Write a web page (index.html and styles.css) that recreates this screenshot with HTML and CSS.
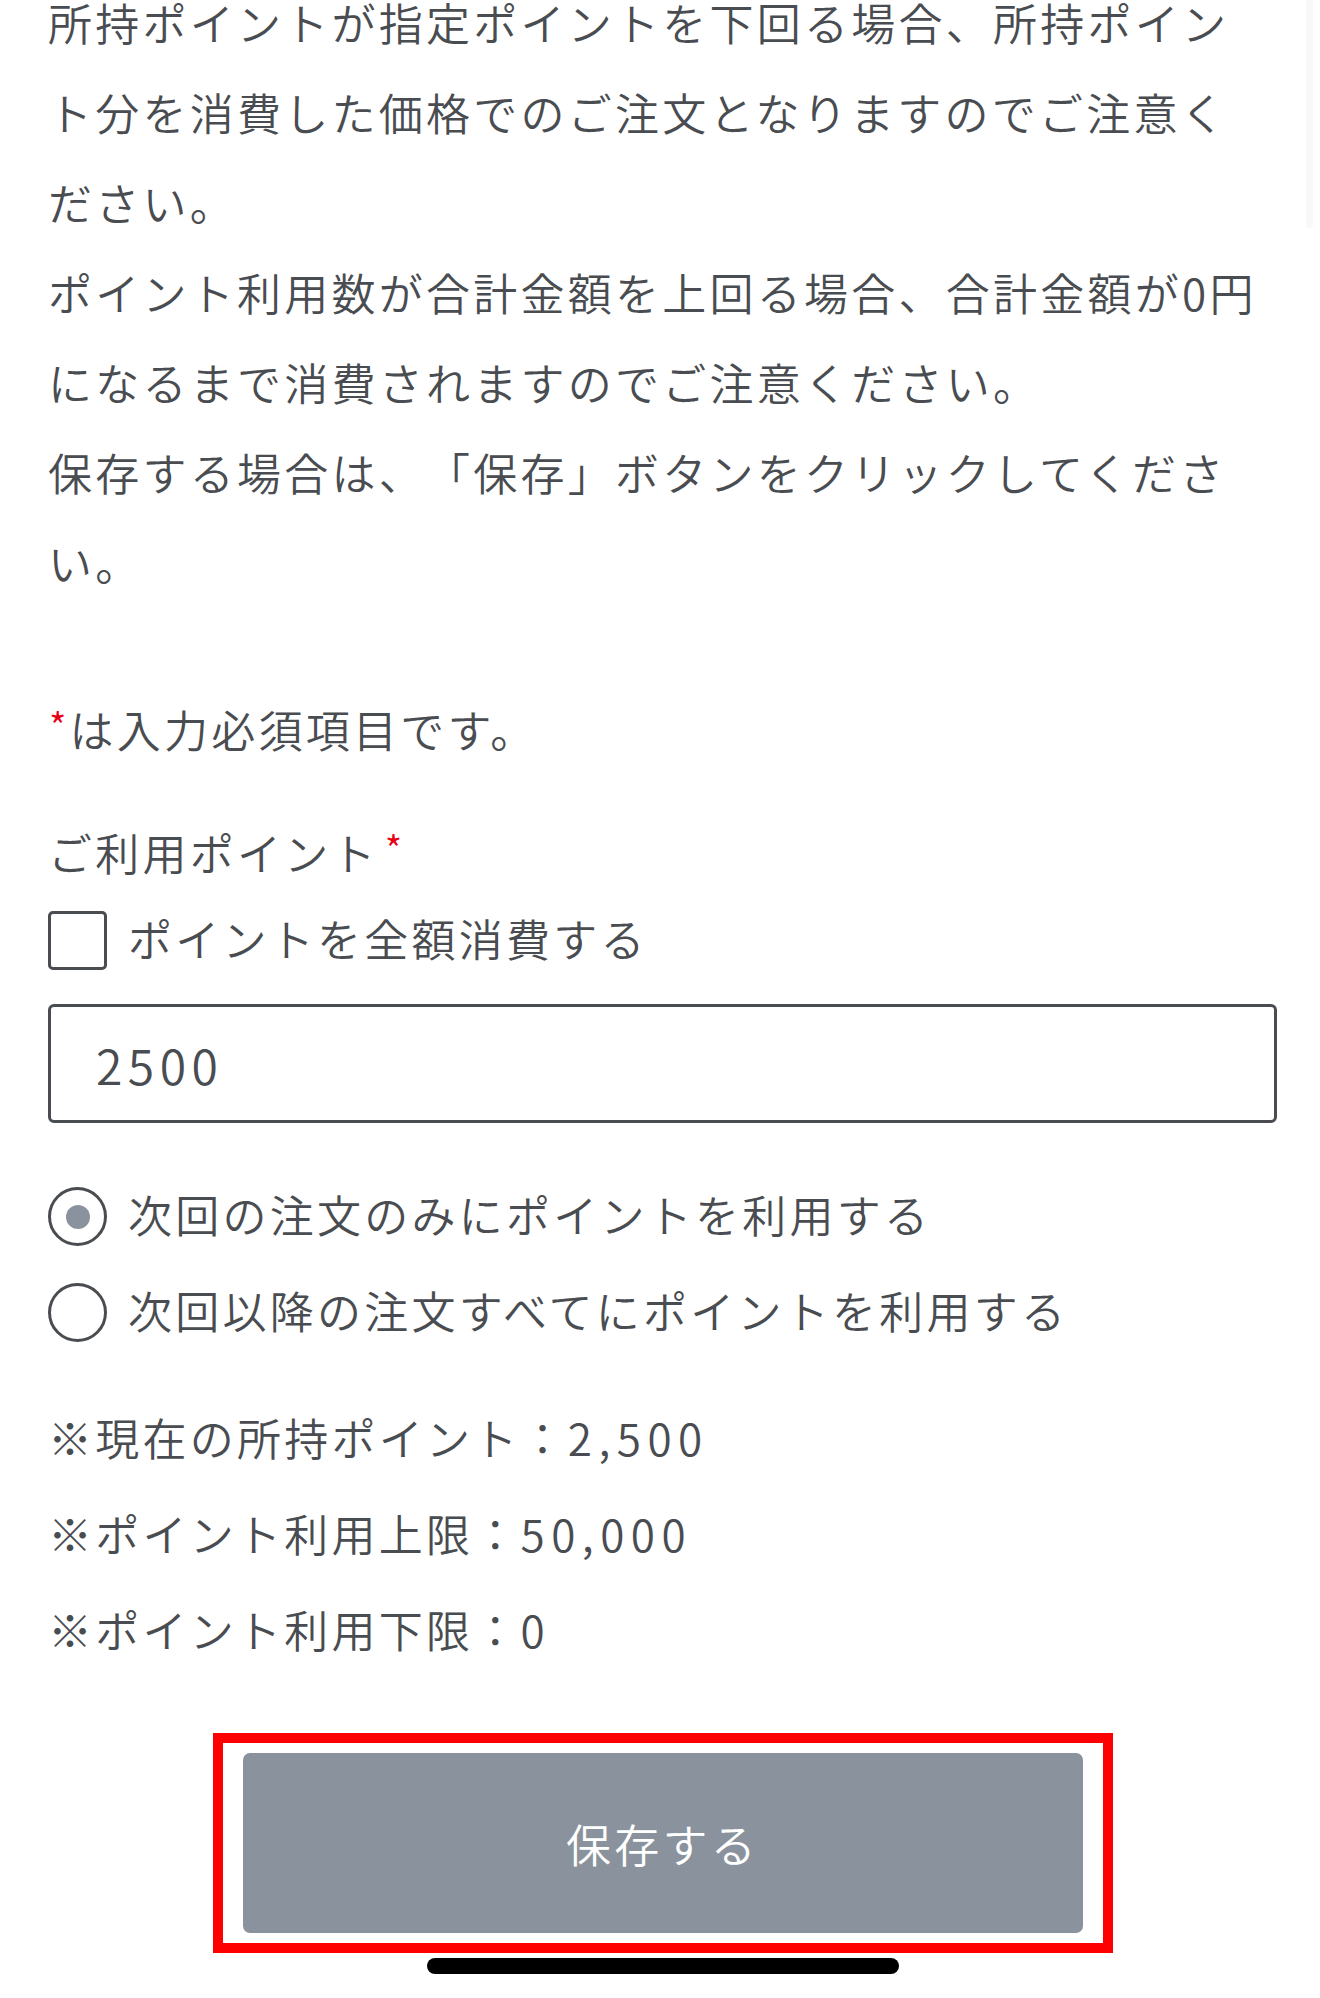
FILE: index.html
```html
<!DOCTYPE html>
<html lang="ja">
<head>
<meta charset="utf-8">
<title>ポイント利用</title>
<link rel="stylesheet" href="styles.css">
</head>
<body>
<div class="scroll-track"></div>
<main class="page">
  <div class="intro">
    <p>所持ポイントが指定ポイントを下回る場合、所持ポイント分を消費した価格でのご注文となりますのでご注意ください。</p>
    <p>ポイント利用数が合計金額を上回る場合、合計金額が0円になるまで消費されますのでご注意ください。</p>
    <p>保存する場合は、「保存」ボタンをクリックしてください。</p>
  </div>

  <p class="required-note"><span class="req">*</span>は入力必須項目です。</p>

  <form class="point-form">
    <div class="field-label">ご利用ポイント<span class="req">*</span></div>
    <label class="check-row">
      <span class="checkbox"></span>
      <span class="opt-text">ポイントを全額消費する</span>
    </label>
    <div class="input-box">2500</div>

    <div class="radios">
      <label class="radio-row">
        <span class="radio checked"></span>
        <span class="opt-text">次回の注文のみにポイントを利用する</span>
      </label>
      <label class="radio-row">
        <span class="radio"></span>
        <span class="opt-text">次回以降の注文すべてにポイントを利用する</span>
      </label>
    </div>

    <ul class="notes">
      <li>※現在の所持ポイント：<span class="num">2,500</span></li>
      <li>※ポイント利用上限：<span class="num">50,000</span></li>
      <li>※ポイント利用下限：<span class="num">0</span></li>
    </ul>

    <div class="btn-wrap">
      <div class="highlight">
        <button type="button" class="save-btn">保存する</button>
      </div>
    </div>
  </form>
</main>
<div class="home-indicator"></div>
</body>
</html>
```

FILE: styles.css
```css
html, body {
  margin: 0;
  padding: 0;
  background: #ffffff;
}

body {
  position: relative;
  width: 1320px;
  height: 1998px;
  overflow: hidden;
  font-family: "Noto Sans CJK JP", "Noto Sans", sans-serif;
  font-weight: 350;
  color: #494c50;
  font-size: 44px;
  letter-spacing: 3.25px;
  text-spacing-trim: space-all;
}

.scroll-track {
  position: absolute;
  top: 0;
  left: 1306px;
  width: 7px;
  height: 228px;
  background: #f8f8f8;
  border-radius: 0 0 4px 4px;
}

.page {
  padding: 0 43px 0 48px;
  margin-top: -23px;
}

.intro {
  margin-right: 8px;
}

.intro p {
  margin: 0;
  line-height: 90px;
}

.num {
  letter-spacing: 6.5px;
}

.required-note {
  margin: 77px 0 0;
  line-height: 90px;
}

.req {
  color: #e60012;
  font-size: 38px;
  letter-spacing: 0;
  position: relative;
  top: -7px;
  margin-left: 1px;
  margin-right: 3px;
}

.field-label .req {
  margin-left: 6px;
}

.point-form {
  margin-top: 30px;
}

.field-label {
  line-height: 90px;
}

.check-row,
.radio-row {
  display: flex;
  align-items: center;
  gap: 21px;
  height: 59px;
}

.check-row {
  margin-top: 11px;
}

.opt-text {
  line-height: 60px;
  position: relative;
  top: -3px;
}

.checkbox {
  box-sizing: border-box;
  flex: none;
  width: 59px;
  height: 59px;
  border: 3px solid #494c50;
  border-radius: 5px;
  background: #fff;
}

.input-box {
  box-sizing: border-box;
  margin-top: 34px;
  height: 119px;
  border: 3px solid #494c50;
  border-radius: 6px;
  padding-left: 45px;
  display: flex;
  align-items: center;
  font-size: 48px;
  letter-spacing: 5.5px;
}

.radios {
  margin-top: 64px;
  display: flex;
  flex-direction: column;
  gap: 37px;
}

.radio {
  box-sizing: border-box;
  flex: none;
  width: 59px;
  height: 59px;
  border: 3px solid #494c50;
  border-radius: 50%;
  display: flex;
  align-items: center;
  justify-content: center;
}

.radio.checked::after {
  content: "";
  width: 24px;
  height: 24px;
  border-radius: 50%;
  background: #8a939d;
}

.notes {
  list-style: none;
  margin: 47px 0 0;
  padding: 0;
}

.notes li {
  line-height: 96px;
}

.btn-wrap {
  margin-top: 56px;
  display: flex;
  justify-content: center;
}

.highlight {
  box-sizing: border-box;
  width: 900px;
  height: 220px;
  border: 10px solid #ff0000;
  display: flex;
  align-items: center;
  justify-content: center;
}

.save-btn {
  width: 840px;
  height: 180px;
  border: none;
  border-radius: 7px;
  background: #8a939d;
  color: #ffffff;
  font-family: "Noto Sans CJK JP", "Noto Sans", sans-serif;
  font-weight: 350;
  font-size: 45px;
  letter-spacing: 3.25px;
  padding: 0;
}

.home-indicator {
  position: absolute;
  left: 427px;
  top: 1958px;
  width: 472px;
  height: 16px;
  border-radius: 8px;
  background: #000000;
}
```
